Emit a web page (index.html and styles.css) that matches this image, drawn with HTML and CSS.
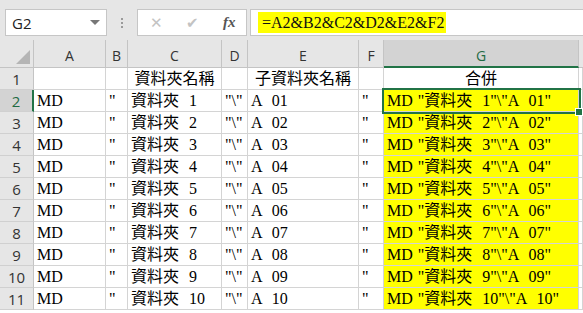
FILE: index.html
```html
<!DOCTYPE html>
<html lang="zh-TW">
<head>
    <meta charset="UTF-8">
    <meta name="viewport" content="width=device-width, initial-scale=1.0">
    <title>合併</title>
    <link rel="stylesheet" href="styles.css">
</head>
<body>
    <!-- 公式列 -->
    <div class="toolbar">
        <div class="name-box">
            <span>G2</span>
            <span class="caret"></span>
        </div>
        <div class="grip">
            <span></span><span></span><span></span>
        </div>
        <div class="func-box">
            <span class="fn-icon fn-x">&#x2715;</span>
            <span class="fn-icon fn-ok">&#x2714;</span>
            <span class="fn-fx">fx</span>
        </div>
        <div class="formula-box">
            <span class="formula">=A2&amp;B2&amp;C2&amp;D2&amp;E2&amp;F2</span>
        </div>
    </div>

    <!-- 工作表 -->
    <div class="sheet" id="sheet">
        <div class="hdr corner"><span class="tri"></span></div>
        <div class="hdr col">A</div>
        <div class="hdr col">B</div>
        <div class="hdr col">C</div>
        <div class="hdr col">D</div>
        <div class="hdr col">E</div>
        <div class="hdr col">F</div>
        <div class="hdr col sel-col">G</div>
        <div class="hdr col blank"></div>

        <div class="hdr row">1</div>
        <div class="cell"></div>
        <div class="cell"></div>
        <div class="cell center">資料夾名稱</div>
        <div class="cell"></div>
        <div class="cell center">子資料夾名稱</div>
        <div class="cell"></div>
        <div class="cell center">合併</div>
        <div class="cell"></div>
    </div>

    <script>
        // 產生第 2 ~ 11 列資料
        const sheet = document.getElementById('sheet');
        const rows = Array.from({length: 10}, (_, i) => {
            const n = i + 1;
            const sub = n < 10 ? '0' + n : String(n);
            return {
                num: n + 1,
                a: 'MD ',
                b: '"',
                c: `資料夾  ${n}`,
                d: '"\\"',
                e: `A  ${sub}`,
                f: '"'
            };
        });

        rows.forEach((r, i) => {
            const sel = i === 0;
            sheet.insertAdjacentHTML('beforeend', `
                <div class="hdr row${sel ? ' sel-row' : ''}">${r.num}</div>
                <div class="cell">${r.a}</div>
                <div class="cell">${r.b}</div>
                <div class="cell">${r.c}</div>
                <div class="cell">${r.d}</div>
                <div class="cell">${r.e}</div>
                <div class="cell">${r.f}</div>
                <div class="cell yellow${sel ? ' active' : ''}">${r.a + r.b + r.c + r.d + r.e + r.f}</div>
                <div class="cell"></div>
            `);
        });
    </script>
</body>
</html>
```

FILE: styles.css
```css
* {
    margin: 0;
    padding: 0;
    box-sizing: border-box;
}

body {
    width: 583px;
    height: 313px;
    overflow: hidden;
    background: #fff;
    font-family: 'Liberation Serif', 'Noto Sans CJK TC', serif;
}

/* 公式列 */
.toolbar {
    height: 40px;
    background: #e6e6e6;
    display: flex;
    align-items: flex-start;
    padding: 9px 0 0 5px;
}

.name-box {
    width: 102px;
    height: 27px;
    background: #fff;
    border: 1px solid #c6c6c6;
    display: flex;
    align-items: center;
    justify-content: space-between;
    padding: 0 6px 0 6px;
    font-family: 'Open Sans', 'Liberation Sans', sans-serif;
    font-size: 15px;
    color: #222;
}

.caret {
    width: 0;
    height: 0;
    border-left: 5px solid transparent;
    border-right: 5px solid transparent;
    border-top: 5px solid #777;
}

.grip {
    width: 30px;
    height: 27px;
    display: flex;
    flex-direction: column;
    align-items: center;
    justify-content: center;
    gap: 2px;
}

.grip span {
    width: 2px;
    height: 2px;
    background: #9a9a9a;
}

.func-box {
    width: 110px;
    height: 27px;
    background: #fff;
    border: 1px solid #c6c6c6;
    display: flex;
    align-items: center;
    padding: 0 0 0 12px;
    font-family: 'DejaVu Sans', sans-serif;
}

.fn-icon {
    color: #c3c3c3;
    font-size: 15px;
    width: 36px;
}

.fn-fx {
    font-family: 'Liberation Serif', serif;
    font-style: italic;
    font-weight: bold;
    font-size: 15px;
    color: #555;
    margin-left: 1px;
}

.formula-box {
    flex: 1;
    height: 27px;
    margin-left: 3px;
    background: #fff;
    border: 1px solid #c6c6c6;
    border-right: none;
    padding: 2px 0 0 7px;
}

.formula {
    display: inline-block;
    background: #ffff00;
    font-size: 16px;
    line-height: 21px;
    padding: 0 2px 0 4px;
    color: #111;
}

/* 工作表 */
.sheet {
    display: grid;
    grid-template-columns: 34px 72px 22px 94px 26px 111px 25px 195px 1fr;
    grid-template-rows: 28px repeat(11, 22px);
}

.hdr {
    background: #e6e6e6;
    font-family: 'Open Sans', 'Liberation Sans', sans-serif;
    font-size: 14px;
    color: #333;
    display: flex;
    align-items: center;
    justify-content: center;
}

.corner {
    position: relative;
    border-right: 1px solid #c4c4c4;
    border-bottom: 1px solid #c4c4c4;
}

.tri {
    position: absolute;
    right: 3px;
    bottom: 3px;
    width: 0;
    height: 0;
    border-left: 14px solid transparent;
    border-bottom: 14px solid #b5b5b5;
}

.col {
    border-right: 1px solid #c4c4c4;
    border-bottom: 1px solid #c4c4c4;
    padding-top: 4px;
}

.col.blank {
    border-right: none;
}

.sel-col {
    background: #d3d3d3;
    color: #1f6b43;
    border-bottom: 2px solid #217346;
}

.row {
    border-right: 1px solid #c4c4c4;
    border-bottom: 1px solid #d0d0d0;
    font-size: 15px;
}

.sel-row {
    background: #d3d3d3;
    color: #1f6b43;
    border-right: 2px solid #217346;
}

.cell {
    border-right: 1px solid #d4d4d4;
    border-bottom: 1px solid #d4d4d4;
    font-size: 16px;
    line-height: 22px;
    padding: 0 0 0 3px;
    white-space: pre;
    word-spacing: 1px;
    overflow: visible;
    color: #000;
}

.cell.center {
    text-align: center;
    padding: 0;
}

.yellow {
    background: #ffff00;
}

.active {
    position: relative;
    outline: 2px solid #217346;
    outline-offset: 0;
    z-index: 2;
}

.active::after {
    content: '';
    position: absolute;
    right: -5px;
    bottom: -5px;
    width: 6px;
    height: 6px;
    background: #217346;
    border: 1px solid #fff;
}
```
